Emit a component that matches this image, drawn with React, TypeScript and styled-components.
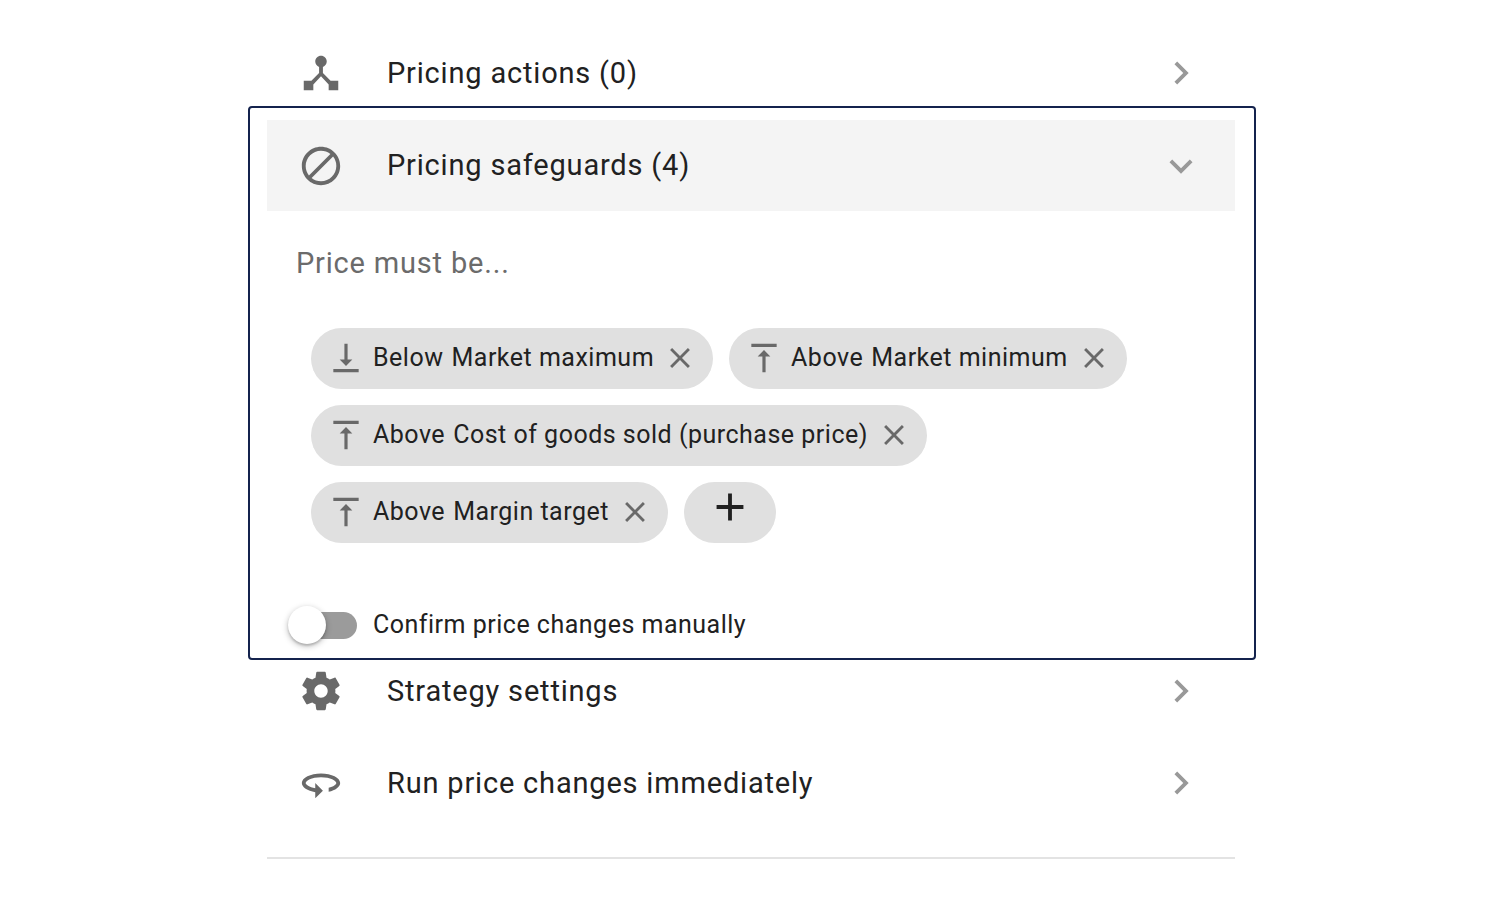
import React, { useState } from "react";
import styled, { createGlobalStyle, css } from "styled-components";

const GlobalStyle = createGlobalStyle`
  *, *::before, *::after { box-sizing: border-box; }
  body {
    margin: 0;
    background: #fff;
    color: #212121;
    font-family: Roboto, "Liberation Sans", sans-serif;
  }
`;

const ICONS = {
  hub: "M17 16l-4-4V8.82C14.16 8.4 15 7.3 15 6c0-1.66-1.34-3-3-3S9 4.34 9 6c0 1.3.84 2.4 2 2.82V12l-4 4H3v5h5v-3.05l4-4.2 4 4.2V21h5v-5h-4z",
  block:
    "M12 2C6.5 2 2 6.5 2 12s4.5 10 10 10 10-4.5 10-10S17.5 2 12 2zM4 12c0-4.4 3.6-8 8-8 1.8 0 3.5.6 4.9 1.7L5.7 16.9C4.6 15.5 4 13.8 4 12zm8 8c-1.8 0-3.5-.6-4.9-1.7L18.3 7.1C19.4 8.5 20 10.2 20 12c0 4.4-3.6 8-8 8z",
  settings:
    "M19.43 12.98c.04-.32.07-.64.07-.98s-.03-.66-.07-.98l2.11-1.65c.19-.15.24-.42.12-.64l-2-3.46c-.12-.22-.39-.3-.61-.22l-2.49 1c-.52-.4-1.08-.73-1.69-.98l-.38-2.65C14.46 2.18 14.25 2 14 2h-4c-.25 0-.46.18-.49.42l-.38 2.65c-.61.25-1.17.59-1.69.98l-2.49-1c-.23-.09-.49 0-.61.22l-2 3.46c-.13.22-.07.49.12.64l2.11 1.65c-.04.32-.07.65-.07.98s.03.66.07.98l-2.11 1.65c-.19.15-.24.42-.12.64l2 3.46c.12.22.39.3.61.22l2.49-1c.52.4 1.08.73 1.69.98l.38 2.65c.03.24.24.42.49.42h4c.25 0 .46-.18.49-.42l.38-2.65c.61-.25 1.17-.59 1.69-.98l2.49 1c.23.09.49 0 .61-.22l2-3.46c.12-.22.07-.49-.12-.64l-2.11-1.65zM12 15.5c-1.93 0-3.5-1.57-3.5-3.5s1.57-3.5 3.5-3.5 3.5 1.57 3.5 3.5-1.57 3.5-3.5 3.5z",
  rotate:
    "M12 7C6.48 7 2 9.24 2 12c0 2.24 2.94 4.13 7 4.77V20l4-4-4-4v2.73c-3.15-.56-5-1.9-5-2.73 0-1.06 3.04-3 8-3s8 1.94 8 3c0 .73-1.46 1.89-4 2.53v2.05c3.53-.77 6-2.53 6-4.58 0-2.76-4.48-5-10-5z",
  right: "M10 6L8.59 7.41 13.17 12l-4.58 4.59L10 18l6-6z",
  down: "M16.59 8.59L12 13.17 7.41 8.59 6 10l6 6 6-6z",
  above: "M8 11h3v10h2V11h3l-4-4-4 4zM4 3v2h16V3H4z",
  below: "M16 13h-3V3h-2v10H8l4 4 4-4zM4 19v2h16v-2H4z",
  close:
    "M19 6.41L17.59 5 12 10.59 6.41 5 5 6.41 10.59 12 5 17.59 6.41 19 12 13.41 17.59 19 19 17.59 13.41 12z",
  plus: "M19 13h-6v6h-2v-6H5v-2h6V5h2v6h6v2z",
};

type IconName = keyof typeof ICONS;

const Svg = styled.svg<{ $size: number }>`
  display: block;
  flex: none;
  width: ${(p) => p.$size}px;
  height: ${(p) => p.$size}px;
  fill: currentColor;
`;

const Icon = ({ name, size = 46 }: { name: IconName; size?: number }) => (
  <Svg $size={size} viewBox="0 0 24 24" aria-hidden="true">
    <path d={ICONS[name]} />
  </Svg>
);

const Page = styled.main`
  width: 68%;
  max-width: 1012px;
  min-width: 640px;
  margin: 0 auto;
  padding: 27px 0 40px 4px;
`;

const Inset = styled.div`
  padding: 0 21px 0 19px;
`;

const largeText = css`
  font-size: 29px;
  line-height: 40px;
  letter-spacing: 0.028em;
`;

const smallText = css`
  font-size: 25px;
  line-height: 32px;
  letter-spacing: 0.02em;
`;

const RowButton = styled.button<{ $open?: boolean }>`
  display: flex;
  align-items: center;
  width: 100%;
  height: ${(p) => (p.$open ? 91 : 92)}px;
  padding: 0 31px;
  border: 0;
  background: ${(p) => (p.$open ? "#f4f4f4" : "transparent")};
  color: #696969;
  font-family: inherit;
  text-align: left;
  cursor: pointer;
`;

const RowTitle = styled.span`
  ${largeText}
  flex: 1;
  padding: 0 0 1px 43px;
  color: #212121;
`;

const Chevron = styled.span`
  color: #999;
`;

const Panel = styled.section`
  margin: -13px 0 -15px;
  padding: 12px 19px 13px 17px;
  border: 2px solid #14234d;
  border-radius: 4px;
`;

const Lead = styled.p`
  ${largeText}
  margin: 32px 29px 0;
  color: #6b6b6b;
`;

const Chips = styled.ul`
  display: flex;
  flex-wrap: wrap;
  gap: 16px;
  margin: 45px 44px 0;
  padding: 0;
  list-style: none;
`;

const pill = css`
  display: flex;
  height: 61px;
  border-radius: 31px;
  background: #e0e0e0;
`;

const Chip = styled.li`
  ${pill}
  align-items: center;
  padding: 0 16px 1px;
  color: #696969;
`;

const ChipText = styled.span`
  ${smallText}
  display: flex;
  gap: 8px;
  padding: 0 9px 0 8px;
  color: #212121;
  white-space: nowrap;
`;

const RemoveButton = styled.button`
  display: block;
  padding: 0;
  border: 0;
  background: none;
  color: inherit;
  cursor: pointer;
`;

const AddButton = styled.button`
  ${pill}
  justify-content: center;
  width: 92px;
  padding: 2px 0 0;
  border: 0;
  color: #212121;
  cursor: pointer;
`;

const SwitchLabel = styled.label`
  ${smallText}
  display: flex;
  align-items: center;
  gap: 16px;
  width: max-content;
  margin: 66px 0 0 21px;
  padding-bottom: 4px;
  cursor: pointer;
`;

const Switch = styled.input`
  appearance: none;
  display: flex;
  align-items: center;
  width: 69px;
  height: 27px;
  margin: 0;
  border-radius: 14px;
  background: linear-gradient(#9b9b9b, #9b9b9b) right / 58px 27px no-repeat;
  cursor: pointer;

  &::before {
    content: "";
    width: 38px;
    height: 38px;
    border-radius: 50%;
    background: #fff;
    box-shadow: 0 2px 6px rgba(0, 0, 0, 0.28), 0 2px 2px rgba(0, 0, 0, 0.14);
  }

  &:checked {
    justify-content: flex-end;
    background-position: left;
  }
`;

const Divider = styled.hr`
  height: 2px;
  margin: 28px 0 0;
  border: 0;
  background: #e3e3e3;
`;

type RowProps = { icon: IconName; title: string; open?: boolean; onClick?: () => void };

const Row = ({ icon, title, open, onClick }: RowProps) => (
  <RowButton type="button" $open={open} aria-expanded={!!open} onClick={onClick}>
    <Icon name={icon} />
    <RowTitle>{title}</RowTitle>
    <Chevron>
      <Icon name={open ? "down" : "right"} />
    </Chevron>
  </RowButton>
);

const SAFEGUARDS: { side: "above" | "below"; target: string }[] = [
  { side: "below", target: "Market maximum" },
  { side: "above", target: "Market minimum" },
  { side: "above", target: "Cost of goods sold (purchase price)" },
  { side: "above", target: "Margin target" },
];

export default function App() {
  const [items, setItems] = useState(SAFEGUARDS);
  const [confirm, setConfirm] = useState(false);

  return (
    <>
      <GlobalStyle />
      <Page>
        <Inset>
          <Row icon="hub" title="Pricing actions (0)" />
        </Inset>
        <Panel>
          <Row icon="block" title={`Pricing safeguards (${items.length})`} open />
          <Lead>Price must be...</Lead>
          <Chips>
            {items.map((item) => (
              <Chip key={item.target}>
                <Icon name={item.side} size={38} />
                <ChipText>
                  <span>{item.side === "above" ? "Above" : "Below"}</span>
                  <span>{item.target}</span>
                </ChipText>
                <RemoveButton
                  type="button"
                  aria-label={`Remove ${item.target}`}
                  onClick={() => setItems(items.filter((other) => other !== item))}
                >
                  <Icon name="close" size={34} />
                </RemoveButton>
              </Chip>
            ))}
            <li>
              <AddButton type="button" aria-label="Add safeguard">
                <Icon name="plus" />
              </AddButton>
            </li>
          </Chips>
          <SwitchLabel>
            <Switch
              type="checkbox"
              role="switch"
              checked={confirm}
              onChange={(event) => setConfirm(event.target.checked)}
            />
            Confirm price changes manually
          </SwitchLabel>
        </Panel>
        <Inset>
          <Row icon="settings" title="Strategy settings" />
          <Row icon="rotate" title="Run price changes immediately" />
          <Divider />
        </Inset>
      </Page>
    </>
  );
}
